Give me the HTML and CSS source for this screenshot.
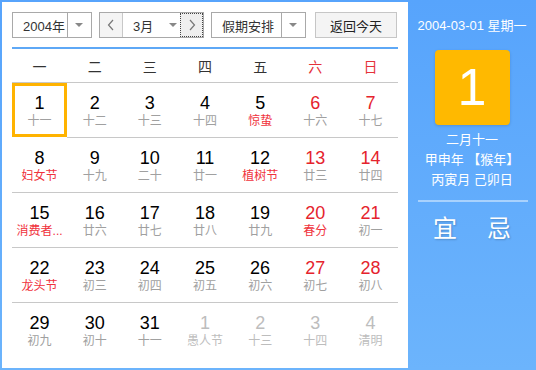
FILE: index.html
```html
<!DOCTYPE html>
<html lang="zh-CN">
<head>
    <meta charset="UTF-8">
    <title>万年历</title>
    <link rel="stylesheet" href="styles.css">
</head>
<body>
    <div class="calendar">
        <!-- left: month grid -->
        <div class="main">
            <div class="toolbar">
                <div class="select year">
                    <span class="select-text">2004年</span>
                    <span class="select-arrow"><i class="tri"></i></span>
                </div>
                <div class="month-group">
                    <span class="nav prev">
                        <svg width="8" height="12" viewBox="0 0 8 12"><polyline points="6,1 1.5,6 6,11" fill="none" stroke="#777" stroke-width="1.2"/></svg>
                    </span>
                    <span class="month-text">3月<i class="tri"></i></span>
                    <span class="nav next">
                        <svg width="8" height="12" viewBox="0 0 8 12"><polyline points="2,1 6.5,6 2,11" fill="none" stroke="#777" stroke-width="1.2"/></svg>
                    </span>
                </div>
                <div class="select holiday">
                    <span class="select-text">假期安排</span>
                    <span class="select-arrow"><i class="tri"></i></span>
                </div>
                <button class="today-btn">返回今天</button>
            </div>

            <div class="weekdays">
                <span>一</span><span>二</span><span>三</span><span>四</span><span>五</span>
                <span class="weekend">六</span><span class="weekend">日</span>
            </div>

            <div class="days">
                <div class="day selected"><b>1</b><em>十一</em></div>
                <div class="day"><b>2</b><em>十二</em></div>
                <div class="day"><b>3</b><em>十三</em></div>
                <div class="day"><b>4</b><em>十四</em></div>
                <div class="day"><b>5</b><em class="fest">惊蛰</em></div>
                <div class="day weekend"><b>6</b><em>十六</em></div>
                <div class="day weekend"><b>7</b><em>十七</em></div>

                <div class="day"><b>8</b><em class="fest">妇女节</em></div>
                <div class="day"><b>9</b><em>十九</em></div>
                <div class="day"><b>10</b><em>二十</em></div>
                <div class="day"><b>11</b><em>廿一</em></div>
                <div class="day"><b>12</b><em class="fest">植树节</em></div>
                <div class="day weekend"><b>13</b><em>廿三</em></div>
                <div class="day weekend"><b>14</b><em>廿四</em></div>

                <div class="day"><b>15</b><em class="fest">消费者...</em></div>
                <div class="day"><b>16</b><em>廿六</em></div>
                <div class="day"><b>17</b><em>廿七</em></div>
                <div class="day"><b>18</b><em>廿八</em></div>
                <div class="day"><b>19</b><em>廿九</em></div>
                <div class="day weekend"><b>20</b><em class="fest">春分</em></div>
                <div class="day weekend"><b>21</b><em>初一</em></div>

                <div class="day"><b>22</b><em class="fest">龙头节</em></div>
                <div class="day"><b>23</b><em>初三</em></div>
                <div class="day"><b>24</b><em>初四</em></div>
                <div class="day"><b>25</b><em>初五</em></div>
                <div class="day"><b>26</b><em>初六</em></div>
                <div class="day weekend"><b>27</b><em>初七</em></div>
                <div class="day weekend"><b>28</b><em>初八</em></div>

                <div class="day last-row"><b>29</b><em>初九</em></div>
                <div class="day last-row"><b>30</b><em>初十</em></div>
                <div class="day last-row"><b>31</b><em>十一</em></div>
                <div class="day last-row other"><b>1</b><em>愚人节</em></div>
                <div class="day last-row other"><b>2</b><em>十三</em></div>
                <div class="day last-row other"><b>3</b><em>十四</em></div>
                <div class="day last-row other"><b>4</b><em>清明</em></div>
            </div>
        </div>

        <!-- right: selected day detail -->
        <div class="side">
            <div class="side-date">2004-03-01 星期一</div>
            <div class="big-day">1</div>
            <div class="lunar-info">
                <p>二月十一</p>
                <p>甲申年 【猴年】</p>
                <p>丙寅月 己卯日</p>
            </div>
            <div class="side-line"></div>
            <div class="yi-ji">
                <span>宜</span><span>忌</span>
            </div>
        </div>
    </div>
</body>
</html>
```

FILE: styles.css
```css
* {
    margin: 0;
    padding: 0;
    box-sizing: border-box;
}

body {
    font-family: "Liberation Sans", "Noto Sans CJK SC", sans-serif;
    background: #fff;
}

.calendar {
    display: flex;
    width: 536px;
    height: 370px;
    background: linear-gradient(to bottom, #57a4fc, #6cb4fc);
}

.main {
    width: 406px;
    height: 366px;
    margin: 2px 0 2px 2px;
    background: #fff;
    padding: 10px 10px 0 10px;
}

/* toolbar */
.toolbar {
    display: flex;
    height: 26px;
    font-size: 13px;
    color: #333;
}

.select {
    display: flex;
    height: 26px;
    border: 1px solid #a9a9a9;
    background: #fff;
}

.select-text {
    display: flex;
    align-items: center;
    padding-left: 10px;
    border-right: 1px solid #a9a9a9;
}

.select-arrow {
    display: flex;
    align-items: center;
    justify-content: center;
    width: 24px;
}

.tri {
    display: inline-block;
    width: 0;
    height: 0;
    border-left: 4px solid transparent;
    border-right: 4px solid transparent;
    border-top: 4px solid #888;
}

.year {
    width: 80px;
}

.year .select-text {
    width: 56px;
}

.month-group {
    display: flex;
    width: 105px;
    height: 26px;
    margin-left: 7px;
    border: 1px solid #a9a9a9;
}

.nav {
    display: flex;
    align-items: center;
    justify-content: center;
    width: 23px;
    background: #f4f4f4;
}

.prev {
    border-right: 1px solid #c8c8c8;
}

.next {
    outline: 1px dotted #444;
    outline-offset: -1px;
    background: #efefef;
}

.month-text {
    flex: 1;
    display: flex;
    align-items: center;
    padding-left: 10px;
}

.month-text .tri {
    margin-left: 16px;
}

.holiday {
    width: 95px;
    margin-left: 7px;
}

.holiday .select-text {
    width: 71px;
}

.today-btn {
    width: 82px;
    height: 26px;
    margin-left: 9px;
    border: 1px solid #c6c6c6;
    background: #f4f4f4;
    font-family: inherit;
    font-size: 13px;
    color: #222;
}

/* week header */
.weekdays {
    display: grid;
    grid-template-columns: repeat(7, 1fr);
    margin-top: 9px;
    border-top: 2px solid #5ea8f6;
    border-bottom: 1px solid #c8c8c8;
    height: 36px;
    align-items: center;
    text-align: center;
    font-size: 14px;
    color: #333;
}

.weekdays .weekend {
    color: #e5323a;
}

/* day grid */
.days {
    display: grid;
    grid-template-columns: repeat(7, 1fr);
    grid-auto-rows: 55px;
}

.day {
    border-bottom: 1px solid #c8c8c8;
    text-align: center;
    padding-top: 10px;
}

.day.last-row {
    border-bottom: none;
}

.day b {
    display: block;
    font-weight: normal;
    font-size: 18px;
    line-height: 20px;
    color: #000;
}

.day em {
    display: block;
    font-style: normal;
    font-size: 12px;
    line-height: 16px;
    color: #a0a0a0;
}

.day.weekend b {
    color: #e5232d;
}

.day em.fest {
    color: #f0323c;
}

.day.other b,
.day.other em {
    color: #bdbdbd;
}

.day.selected {
    border: 3px solid #ffb300;
    padding-top: 7px;
    height: 54px;
}

/* side panel */
.side {
    flex: 1;
    color: #fff;
    text-align: center;
    padding-top: 17px;
}

.side-date {
    font-size: 13px;
    line-height: 18px;
}

.big-day {
    width: 75px;
    height: 75px;
    margin: 15px auto 0;
    background: #ffb900;
    border-radius: 4px;
    font-size: 52px;
    line-height: 75px;
    box-shadow: 0 1px 3px rgba(0, 0, 0, 0.15);
}

.lunar-info {
    margin-top: 5px;
    font-size: 13px;
    line-height: 20px;
}

.side-line {
    height: 2px;
    margin: 10px 8px 0 10px;
    background: rgba(255, 255, 255, 0.45);
}

.yi-ji {
    display: flex;
    justify-content: center;
    gap: 30px;
    margin-top: 12px;
    font-size: 24px;
    line-height: 30px;
    text-shadow: 1px 1px 2px rgba(0, 0, 0, 0.2);
}
```
